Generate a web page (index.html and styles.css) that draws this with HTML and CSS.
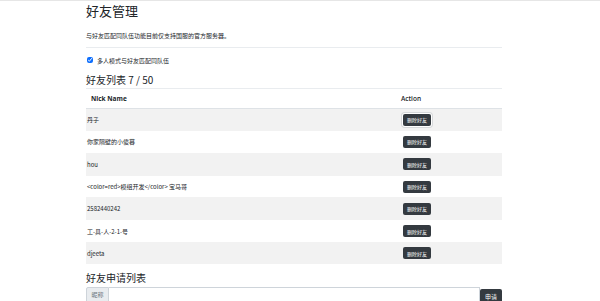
FILE: index.html
```html
<!DOCTYPE html>
<html>
  <head>
    <meta charset="UTF-8">
    <title>好友管理</title>
    <meta name="viewport" content="width=device-width, initial-scale=1.0">
    <link rel="stylesheet" href="styles.css">
  </head>
  <body>
    <div class="container">
      <h2 class="page-title">好友管理</h2>
      <p class="desc">与好友匹配同队伍功能目前仅支持国服的官方服务器。</p>
      <hr class="divider">
      <label class="check-row">
        <input type="checkbox" class="check-box" checked>
        <span>多人模式与好友匹配同队伍</span>
      </label>
      <h4 class="section-title">好友列表 7 / 50</h4>
      <hr class="divider divider-tight">
      <table class="friend-table">
        <thead>
          <tr>
            <th class="col-name">Nick Name</th>
            <th class="col-action">Action</th>
          </tr>
        </thead>
        <tbody>
          <tr class="striped"><td>丹子</td><td class="col-action"><button class="del-button first">删除好友</button></td></tr>
          <tr><td>你家隔壁的小傻暮</td><td class="col-action"><button class="del-button">删除好友</button></td></tr>
          <tr class="striped"><td>hou</td><td class="col-action"><button class="del-button">删除好友</button></td></tr>
          <tr><td>&lt;color=red&gt;模组开发&lt;/color&gt; 宝马哥</td><td class="col-action"><button class="del-button">删除好友</button></td></tr>
          <tr class="striped"><td>2582440242</td><td class="col-action"><button class="del-button">删除好友</button></td></tr>
          <tr><td>工-具-人-2-1-号</td><td class="col-action"><button class="del-button">删除好友</button></td></tr>
          <tr class="striped"><td>djeeta</td><td class="col-action"><button class="del-button">删除好友</button></td></tr>
        </tbody>
      </table>
      <h4 class="section-title apply-title">好友申请列表</h4>
      <div class="input-group">
        <span class="input-addon">昵称</span>
        <input type="text" class="input-field">
        <button class="apply-button">申请</button>
      </div>
    </div>
  </body>
</html>
```
FILE: styles.css
```css
body {
    margin: 0;
    border-top: 1px solid #e6e6e6;
    font-family: "Noto Sans CJK SC", "Noto Sans", sans-serif;
    color: #212529;
    background-color: #fff;
}

.container {
    width: 416px;
    margin-left: 86px;
}

.page-title {
    font-size: 13px;
    font-weight: 400;
    line-height: 16px;
    margin: 2px 0 0;
}

.desc {
    font-size: 6px;
    line-height: 9px;
    margin: 12px 0 0;
}

.divider {
    border: 0;
    border-top: 1px solid #e9ecef;
    margin: 7px 0 0;
}

.check-row {
    display: flex;
    align-items: center;
    gap: 4px;
    height: 10px;
    margin-top: 7px;
    font-size: 6px;
}

.check-box {
    width: 6px;
    height: 6px;
    margin: 0 0 0 1px;
    accent-color: #0d6efd;
}

.section-title {
    font-size: 10px;
    font-weight: 400;
    line-height: 12px;
    margin: 9px 0 0;
}

.divider-tight {
    margin-top: 2px;
}

.friend-table {
    width: 100%;
    border-collapse: collapse;
    font-size: 6px;
    color: #212529;
}

.friend-table th {
    height: 19px;
    text-align: left;
    font-family: "Open Sans", sans-serif;
    font-size: 6.5px;
    font-weight: 700;
    border-bottom: 1px solid #dee2e6;
    padding: 0 0 0 5px;
}

.friend-table td {
    height: 21.3px;
    padding: 0 0 0 1px;
    border-top: 1px solid #f2f2f2;
}

.friend-table th.col-action {
    font-weight: 600;
    padding-left: 0;
}

.col-action {
    width: 100px;
}

.striped td {
    background-color: #f2f2f2;
}

.del-button {
    width: 28px;
    height: 12px;
    padding: 0;
    border: none;
    border-radius: 2px;
    background-color: #343a40;
    color: #fff;
    font-family: "Noto Sans CJK SC", sans-serif;
    font-size: 5px;
    margin-left: 1px;
}

.del-button.first {
    box-shadow: 0 0 0 1px #fff, 0 0 0 2px #d6d8da;
}

.apply-title {
    margin-top: 8px;
}

.input-group {
    display: flex;
    align-items: flex-start;
    margin-top: 3px;
}

.input-addon {
    width: 21px;
    height: 14px;
    line-height: 14px;
    border: 1px solid #ced4da;
    background-color: #e9ecef;
    color: #6c757d;
    font-size: 6px;
    text-align: center;
    border-radius: 2px 0 0 2px;
}

.input-field {
    flex: 1;
    height: 14px;
    border: 1px solid #ced4da;
    border-left: none;
    padding: 0;
    margin: 0;
    box-sizing: content-box;
}

.apply-button {
    width: 22px;
    height: 14px;
    margin-top: 2px;
    border: none;
    border-radius: 2px;
    background-color: #343a40;
    color: #fff;
    font-family: "Noto Sans CJK SC", sans-serif;
    font-size: 6px;
    padding: 0;
}
```
